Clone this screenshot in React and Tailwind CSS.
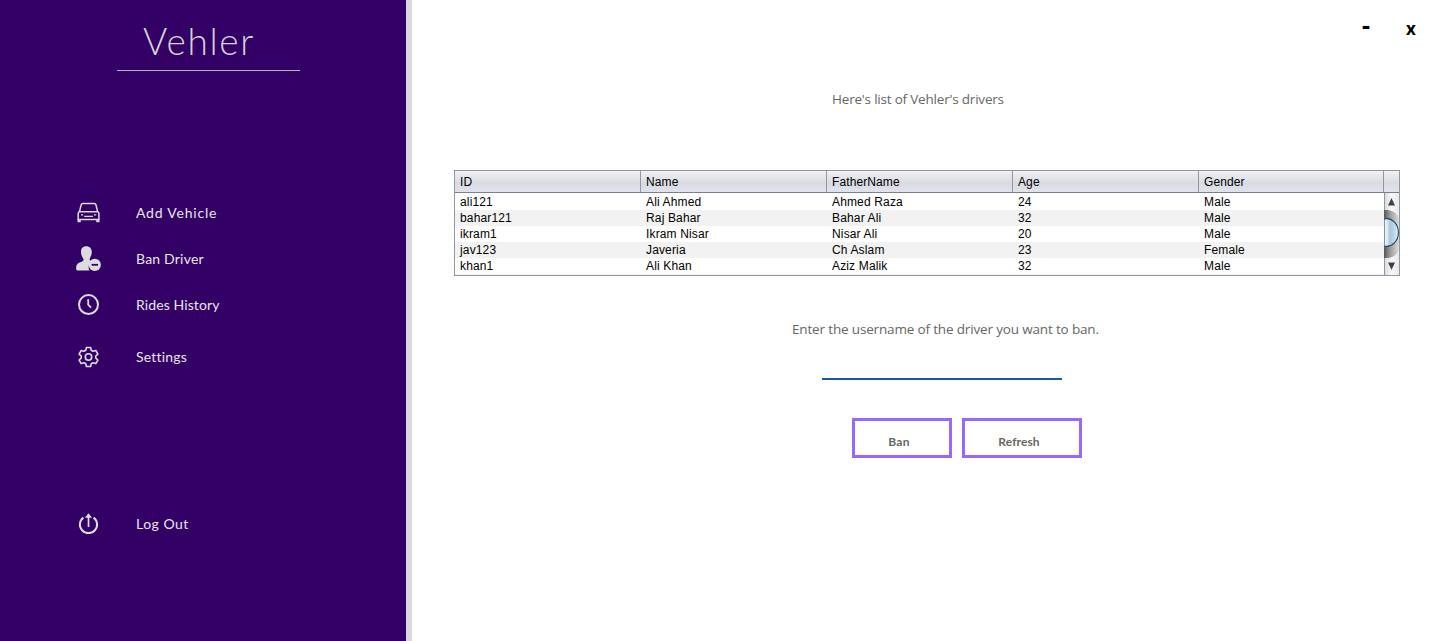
import React from "react";

const drivers = [
  ["ali121", "Ali Ahmed", "Ahmed Raza", "24", "Male"],
  ["bahar121", "Raj Bahar", "Bahar Ali", "32", "Male"],
  ["ikram1", "Ikram Nisar", "Nisar Ali", "20", "Male"],
  ["jav123", "Javeria", "Ch Aslam", "23", "Female"],
  ["khan1", "Ali Khan", "Aziz Malik", "32", "Male"],
];
const columns = ["ID", "Name", "FatherName", "Age", "Gender"];

const CarIcon = () => (
  <svg className="ml-px h-6 w-6" viewBox="0 0 24 24" fill="none" stroke="#dcdcdc" strokeWidth="1.5">
    <path d="M2.5 10.6 4.1 4Q4.5 2.6 5.9 2.6H17.2Q18.6 2.6 19 4L20.6 10.6" />
    <path d="M1.2 18.5V12.4Q1.2 10.7 2.9 10.7H20.2Q21.9 10.7 21.9 12.4V18.5Z" />
    <path d="M1.3 18V20.5H3V18.5M20 18.5V20.5H21.7V18" />
    <path d="M4 13.9H6.2M17 13.9H19.2M7.2 15.3H16" strokeWidth="1.3" />
  </svg>
);

const BanIcon = () => (
  <svg className="h-[26px] w-[26px]" viewBox="0 0 26 26">
    <path
      fill="#dcdcdc"
      d="M10.2.2C13.9.2 15.9 2.6 15.8 6.2 15.7 9.2 14.6 10.7 13.9 12.2 13.2 14 13.8 14.8 16 15.2A7 7 0 0 0 13.5 24.6H2.4C.8 24.6.1 23.8.1 22.4.1 18.6 1.5 17.1 4.3 16.2 7.3 15.3 8.2 14.5 7.2 12.4 6.2 10.7 5 9 5 5.9 5 2.4 6.8.2 10.2.2Z"
    />
    <circle cx="18.8" cy="18.9" r="6.1" fill="#dcdcdc" />
    <path d="M15.6 18.8H22" stroke="#330066" strokeWidth="1.8" />
  </svg>
);

const ClockIcon = () => (
  <svg className="ml-px h-6 w-6" viewBox="0 0 24 24" fill="none" stroke="#dcdcdc" strokeWidth="2">
    <circle cx="11.5" cy="11.6" r="9.5" />
    <path d="M11.2 6.3V11.6L14 14.6" strokeWidth="1.8" />
  </svg>
);

const GearIcon = () => (
  <svg className="-mt-px ml-px h-6 w-6" viewBox="0 0 24 24" fill="none" stroke="#dcdcdc" strokeWidth="1.6" strokeLinejoin="round">
    <path d="M9.4 2.5H13.6L14.2 5.2 16.1 6.3 18.8 5.5 20.9 9.1 18.8 11V13.1L20.9 15 18.8 18.6 16.1 17.8 14.2 18.8 13.6 21.5H9.4L8.8 18.8 6.9 17.8 4.2 18.6 2.1 15 4.2 13.1V11L2.1 9.1 4.2 5.5 6.9 6.3 8.8 5.2Z" />
    <circle cx="11.5" cy="12" r="3.2" />
  </svg>
);

const LogoutIcon = () => (
  <svg className="ml-px h-6 w-6" viewBox="0 0 24 24" fill="none" stroke="#dcdcdc" strokeWidth="2">
    <path d="M6.4 5.6A8.6 8.6 0 1 0 16.6 5.6" />
    <path d="M11.5 15V4" strokeWidth="1.7" />
    <path d="M7.9 5.8 11.5 1.2 15.1 5.8Z" fill="#dcdcdc" stroke="none" />
  </svg>
);

function MenuItem({ icon, children }) {
  return (
    <a className="flex h-[26px] items-center pl-[76px] font-['Lato',sans-serif] text-[14px] font-normal text-[#e6e6ea]">
      <span className="flex w-[60px] shrink-0">{icon}</span>
      <span className="pb-0.5">{children}</span>
    </a>
  );
}

function Sidebar() {
  return (
    <aside className="flex h-full w-[412px] shrink-0 flex-col border-r-[6px] border-[#d8d8de] bg-[#330066]">
      <h1 className="ml-[117px] h-[71px] w-[183px] border-b border-[#b4b4b4] pt-[17px] pl-[26px] font-['Lato',sans-serif] text-[37px] leading-[48px] font-light tracking-[1.7px] text-[#d4d4d4]">
        Vehler
      </h1>
      <nav className="flex flex-col">
        <div className="mt-[129px]">
          <MenuItem icon={<CarIcon />}><span className="tracking-[0.8px]">Add Vehicle</span></MenuItem>
        </div>
        <div className="mt-5">
          <MenuItem icon={<BanIcon />}><span className="tracking-[0.2px]">Ban Driver</span></MenuItem>
        </div>
        <div className="mt-5">
          <MenuItem icon={<ClockIcon />}><span className="tracking-[0.1px]">Rides History</span></MenuItem>
        </div>
        <div className="mt-[26px]">
          <MenuItem icon={<GearIcon />}><span className="tracking-[0.2px]">Settings</span></MenuItem>
        </div>
        <div className="mt-[141px]">
          <MenuItem icon={<LogoutIcon />}><span className="tracking-[0.5px]">Log Out</span></MenuItem>
        </div>
      </nav>
    </aside>
  );
}

function ScrollBar() {
  return (
    <svg className="h-[82px] w-[15px] shrink-0" viewBox="0 0 15 82">
      <defs>
        <linearGradient id="track">
          <stop offset="0" stopColor="#d7d9dd" />
          <stop offset=".5" stopColor="#f8f8fa" />
          <stop offset="1" stopColor="#e7e9ed" />
        </linearGradient>
        <linearGradient id="shade">
          <stop offset="0" stopColor="#555" />
          <stop offset=".4" stopColor="#9b9b9b" />
          <stop offset="1" stopColor="#dcdcdc" />
        </linearGradient>
        <linearGradient id="thumb">
          <stop offset="0" stopColor="#f4f8fb" />
          <stop offset=".25" stopColor="#d9e6f0" />
          <stop offset=".4" stopColor="#a9c5da" />
          <stop offset=".7" stopColor="#bcd6e8" />
          <stop offset="1" stopColor="#e2f4ff" />
        </linearGradient>
      </defs>
      <path d="M0 0H15V82H0Z" fill="url(#track)" />
      <path d="M0 17H4Q12 18 15 25V57Q12 64 4 65H0Z" fill="url(#shade)" />
      <path d="M0 26C8 24 14.4 31 14.4 39.5S8 55 0 53Z" fill="url(#thumb)" stroke="#244563" strokeWidth="1.1" />
      <path d="M.5 0V17M.5 65V82" stroke="#9297a1" />
      <path d="M4 12.5 7.5 5 11 12.5Z M4 69.5H11L7.5 77Z" fill="#404040" />
    </svg>
  );
}

function DriversTable() {
  return (
    <div className="flex h-[106px] w-[946px] flex-col border border-[#9297a1] font-['Liberation_Sans',sans-serif] text-[12px] text-black">
      <div className="flex h-[22px] shrink-0 border-b border-[#7a8290] bg-linear-to-b from-[#f0f1f3] via-[#d9dbe2] via-60% to-[#e0e3eb]">
        {columns.map((name) => (
          <div key={name} className="w-[186px] shrink-0 border-r border-[#9297a1] pl-[5px] leading-[23px] tracking-[0.1px] last:w-[185px]">
            {name}
          </div>
        ))}
      </div>
      <div className="flex min-h-0 flex-1">
        <div className="flex-1 overflow-hidden pt-px">
          {drivers.map((row) => (
            <div key={row[0]} className="flex h-4 bg-white leading-4 tracking-[0.15px] even:bg-[#f2f2f2]">
              {row.map((cell, i) => (
                <div key={i} className="w-[186px] shrink-0 pl-[5px] last:w-[185px]">{cell}</div>
              ))}
            </div>
          ))}
          <div className="h-4 bg-[#f2f2f2]" />
        </div>
        <ScrollBar />
      </div>
    </div>
  );
}

export default function App() {
  return (
    <div className="flex h-[641px] w-[1445px] overflow-hidden bg-white">
      <Sidebar />
      <main className="flex min-w-0 flex-1 flex-col font-['Open_Sans',sans-serif] text-[#666666]">
        <header className="flex h-[89px] shrink-0 justify-end pr-7 font-['Open_Sans',sans-serif] font-bold text-black">
          <button className="h-[52px] w-[10px] pb-1 text-[25px] leading-[48px]">-</button>
          <button className="ml-[34px] h-[58px] w-[12px] text-[17px] leading-[56px]">x</button>
        </header>
        <p className="ml-[420px] h-[81px] text-[13.5px] leading-[20px] whitespace-nowrap tracking-[-0.2px]">Here's list of Vehler's drivers</p>
        <div className="ml-[42px]">
          <DriversTable />
        </div>
        <label className="mt-[43px] mb-px ml-[380px] h-5 text-[13.5px] leading-[20px] whitespace-nowrap tracking-[-0.16px]">
          Enter the username of the driver you want to ban.
        </label>
        <input aria-label="Username" className="ml-[410px] h-10 w-[240px] border-b-2 border-[#125ea5] outline-none" />
        <div className="mt-[38px] ml-[440px] flex gap-[10px] font-['Lato',sans-serif] text-[12px] font-bold">
          <button className="h-10 w-[100px] border-[3px] border-[#9966ff] pt-[7px] pr-[6px] tracking-[0.3px]">Ban</button>
          <button className="h-10 w-[120px] border-[3px] border-[#9966ff] pt-[7px] pr-[6px] tracking-[0.1px]">Refresh</button>
        </div>
      </main>
    </div>
  );
}
